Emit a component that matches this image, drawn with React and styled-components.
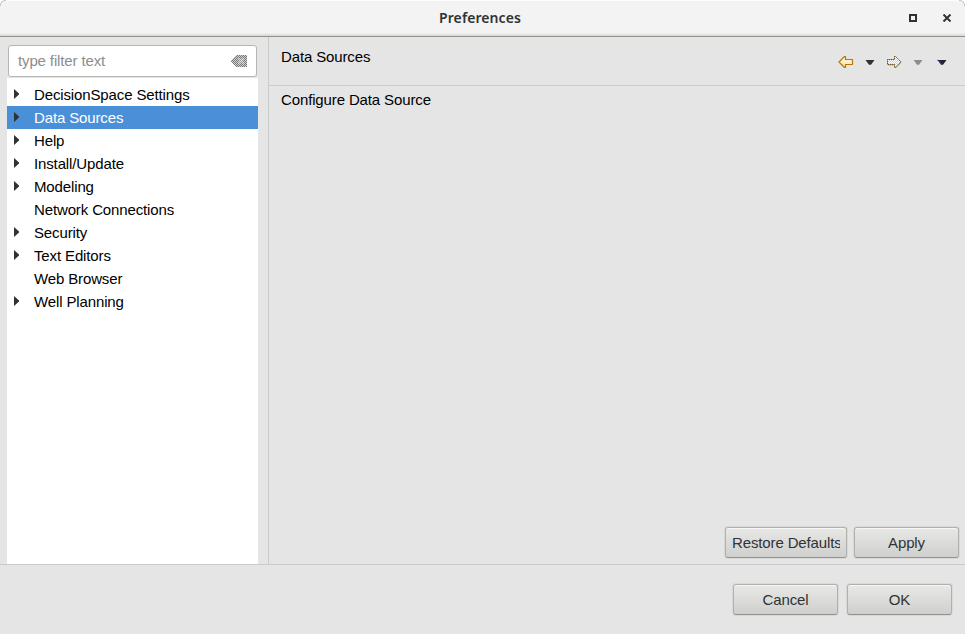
import React from 'react';
import styled, { createGlobalStyle } from 'styled-components';

const GlobalStyle = createGlobalStyle`
  *, *::before, *::after { box-sizing: border-box; }
  body { margin: 0; background: #fff; overflow: hidden; }
`;

const Dialog = styled.div`
  width: 965px;
  height: 634px;
  display: flex;
  flex-direction: column;
  overflow: hidden;
  border-radius: 6px 6px 0 0;
  background: #e5e5e5;
  font: 15px/23px 'Liberation Sans', Arial, sans-serif;
  letter-spacing: -0.13px;
  color: #000;
`;

const TitleBar = styled.header`
  flex: none;
  height: 37px;
  display: grid;
  grid-template-columns: 55px 1fr 60px;
  align-items: center;
  background:
    radial-gradient(circle at 6px 6px, transparent 5px, #a8a8a6 5.800px) 0 0 / 6px 6px no-repeat,
    radial-gradient(circle at 0 6px, transparent 5px, #a8a8a6 5.800px) 100% 0 / 6px 6px no-repeat,
    linear-gradient(#fcfcfc 0 1px, #f3f3f3 1px 33px, #e9e9e8 34px, #dcdcda 35px);
  border-bottom: 1px solid #8f9088;
`;

const Title = styled.h1`
  grid-column: 2;
  margin: 0;
  text-align: center;
  font: 600 14px/20px 'Noto Sans', sans-serif;
  letter-spacing: 0.08px;
  color: #2e3436;
`;

const WindowControls = styled.div`
  display: flex;
  gap: 25px;
  padding-left: 4px;

  svg { display: block; }
`;

const Body = styled.div`
  flex: none;
  height: 528px;
  display: flex;
  border-bottom: 1px solid #cbcbcb;
`;

const Sidebar = styled.aside`
  width: 269px;
  padding: 8px 10px 0 7px;
  display: flex;
  flex-direction: column;
  border-right: 1px solid #cbcbcb;
`;

const Filter = styled.div`
  height: 32px;
  margin: 0 1px 1px;
  padding: 0 9px;
  display: flex;
  align-items: center;
  justify-content: space-between;
  border: 1px solid #b6b6b3;
  border-radius: 3px;
  background: #fff;
  color: #8b8e8f;
`;

const Placeholder = styled.span`
  padding-bottom: 2px;
`;

const Tree = styled.ul`
  flex: 1;
  margin: 0;
  padding: 5px 0 0;
  list-style: none;
  background: #fff;
`;

const TreeRow = styled.li`
  height: 23px;
  display: flex;
  padding-left: 7px;
  background: ${({ $selected }) => ($selected ? '#4a90d9' : 'transparent')};
  color: ${({ $selected }) => ($selected ? '#fff' : '#000')};
`;

const Expander = styled.span`
  width: 20px;
  padding-top: 6px;

  svg { display: block; }
`;

const Page = styled.main`
  flex: 1;
  display: flex;
  flex-direction: column;
`;

const PageHeader = styled.div`
  height: 49px;
  padding: 8px 15px 0 12px;
  display: flex;
  justify-content: space-between;
  border-bottom: 1px solid #cbcbcb;
`;

const Navigation = styled.div`
  display: flex;
  gap: 8px;
  padding-top: 9px;

  svg { display: block; }
`;

const PageContent = styled.div`
  flex: 1;
  padding: 2px 12px;
`;

const ButtonRow = styled.div`
  display: flex;
  justify-content: flex-end;
  gap: ${({ $gap }) => $gap}px;
  padding: ${({ $padding }) => $padding};
`;

const Button = styled.button`
  flex: none;
  width: ${({ $width }) => $width}px;
  height: 31px;
  padding: 0 6px;
  border: 1px solid #b0b0ad;
  border-bottom-color: #91918e;
  border-radius: 3px;
  background: linear-gradient(#e8e8e7, #cfcfcd);
  box-shadow: inset 0 1px #f6f6f5, 0 0 0 1px #d9d9d8;
  font: 15px/29px 'Liberation Sans', Arial, sans-serif;
  letter-spacing: -0.13px;
  color: #2e3436;
`;

const ButtonLabel = styled.span`
  display: block;
  overflow: hidden;
  white-space: nowrap;
`;

const nodes = [
  ['DecisionSpace Settings', true],
  ['Data Sources', true],
  ['Help', true],
  ['Install/Update', true],
  ['Modeling', true],
  ['Network Connections', false],
  ['Security', true],
  ['Text Editors', true],
  ['Web Browser', false],
  ['Well Planning', true],
];

const ClearIcon = () => (
  <svg width="16" height="12" shapeRendering="crispEdges">
    <defs>
      <pattern id="stipple" width="2" height="2" patternUnits="userSpaceOnUse">
        <path fill="#777773" d="M0 0h1v1H0zM1 1h1v1H1z" />
        <path fill="#d0d0ce" d="M1 0h1v1H1zM0 1h1v1H0z" />
      </pattern>
    </defs>
    <path fill="url(#stipple)" d="M5 0H16V12H5L0 6.5V5.5Z" />
    <path fill="#fff" fillOpacity=".3" d="M7 3h2v1h2V3h2v2h-1v2h1v2h-2V8H9v1H7V7h1V5H7z" />
  </svg>
);

const BackIcon = () => (
  <svg width="16" height="16">
    <defs>
      <linearGradient id="gold" x1="0" x2="0" y1="0" y2="1">
        <stop stopColor="#fffdf2" />
        <stop offset="1" stopColor="#ffe08c" />
      </linearGradient>
    </defs>
    <path fill="url(#gold)" stroke="#b87410" strokeWidth="1.200" strokeLinejoin="round" d="M6.500 2.500 1 8l5.500 5.500h1v-3h7v-5h-7v-3z" />
  </svg>
);

const ForwardIcon = () => (
  <svg width="16" height="16">
    <defs>
      <pattern id="checker" width="2" height="2" patternUnits="userSpaceOnUse">
        <path fill="#fff" d="M0 0h1v1H0zM1 1h1v1H1z" />
        <path fill="#d4cfc6" d="M1 0h1v1H1zM0 1h1v1H0z" />
      </pattern>
    </defs>
    <path fill="#c9c7c4" d="M10 14.500 16 8.500 15 7 9 13zM2 11h7v1H2z" />
    <path fill="url(#checker)" stroke="#a89e8c" d="M8.500 2.500h1L15 8l-5.500 5.500h-1v-3h-7v-5h7z" />
    <path fill="none" stroke="#6b522b" strokeDasharray="1 1" d="M8.500 2.500h1L15 8l-5.500 5.500h-1v-3h-7v-5h7z" />
  </svg>
);

const Caret = ({ color = '#2e3436', edge }) => (
  <svg width="16" height="16">
    <path fill={color} d="M3.500 6h9L9 10.800H7z" />
    {edge && <path stroke={edge} fill="none" d="M3.500 6.300h1l3.300 3.800" />}
  </svg>
);

export default function App() {
  return (
    <>
      <GlobalStyle />
      <Dialog>
        <TitleBar>
          <Title>Preferences</Title>
          <WindowControls>
            <svg width="8" height="8"><path fill="none" stroke="#2e3436" strokeWidth="2" d="M1 1h6v6H1z" /></svg>
            <svg width="10" height="8"><path stroke="#2e3436" strokeWidth="2" d="m1.500.5 7 7m0-7-7 7" /></svg>
          </WindowControls>
        </TitleBar>
        <Body>
          <Sidebar>
            <Filter>
              <Placeholder>type filter text</Placeholder>
              <ClearIcon />
            </Filter>
            <Tree>
              {nodes.map(([label, expandable]) => (
                <TreeRow key={label} $selected={label === 'Data Sources'}>
                  <Expander>
                    {expandable && (
                      <svg width="5" height="10"><path fill="#2e3436" d="M0 0 5 4.500v1L0 10z" /></svg>
                    )}
                  </Expander>
                  {label}
                </TreeRow>
              ))}
            </Tree>
          </Sidebar>
          <Page>
            <PageHeader>
              <span>Data Sources</span>
              <Navigation>
                <BackIcon />
                <Caret />
                <ForwardIcon />
                <Caret color="#8b8e8f" />
                <Caret color="#25232f" edge="#4a2b8a" />
              </Navigation>
            </PageHeader>
            <PageContent>Configure Data Source</PageContent>
            <ButtonRow $gap={7} $padding="0 6px 6px 0">
              <Button $width={122}><ButtonLabel>Restore Defaults</ButtonLabel></Button>
              <Button $width={105}><ButtonLabel>Apply</ButtonLabel></Button>
            </ButtonRow>
          </Page>
        </Body>
        <ButtonRow $gap={9} $padding="19px 13px 0 0">
          <Button $width={105}><ButtonLabel>Cancel</ButtonLabel></Button>
          <Button $width={105}><ButtonLabel>OK</ButtonLabel></Button>
        </ButtonRow>
      </Dialog>
    </>
  );
}
